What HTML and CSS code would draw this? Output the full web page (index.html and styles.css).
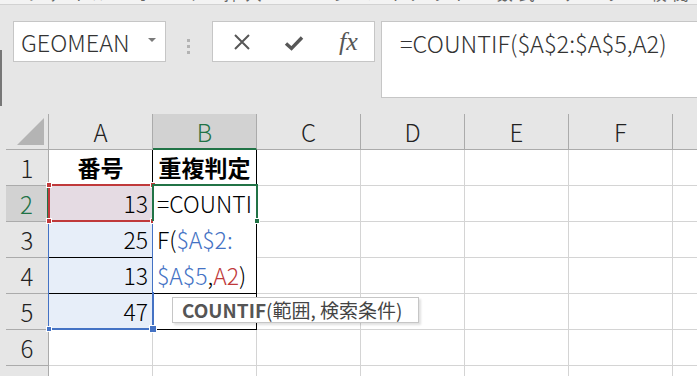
FILE: index.html
```html
<!DOCTYPE html>
<html lang="ja">
<head>
    <meta charset="UTF-8">
    <meta name="viewport" content="width=device-width, initial-scale=1.0">
    <title>COUNTIF 重複判定</title>
    <link rel="stylesheet" href="styles.css">
</head>
<body>
    <div class="ribbon-edge">
        <span>ファイル　ホーム　挿入　ページ レイアウト　数式　データ　校閲　表示　ヘルプ</span>
    </div>

    <div class="fbar">
        <div class="edge"></div>
        <div class="namebox">
            <span>GEOMEAN</span>
            <span class="drop"></span>
        </div>
        <div class="grip">
            <i></i><i></i><i></i>
        </div>
        <div class="fbtns">
            <svg class="ico-x" width="18" height="18" viewBox="0 0 18 18">
                <path d="M2 2L16 16M16 2L2 16" stroke="#575757" stroke-width="2" fill="none"/>
            </svg>
            <svg class="ico-ok" width="20" height="16" viewBox="0 0 20 16">
                <path d="M2 8.5L7.5 13.5L18 2.5" stroke="#575757" stroke-width="3.4" fill="none"/>
            </svg>
            <span class="fx">fx</span>
        </div>
        <div class="formula">=COUNTIF($A$2:$A$5,A2)</div>
    </div>

    <div class="sheet">
        <!-- header row -->
        <div class="hd corner"><span class="tri"></span></div>
        <div class="hd">A</div>
        <div class="hd hd-sel">B</div>
        <div class="hd">C</div>
        <div class="hd">D</div>
        <div class="hd">E</div>
        <div class="hd">F</div>
        <div class="hd"></div>

        <!-- row 1 -->
        <div class="rh">1</div>
        <div class="c t th">番号</div>
        <div class="c t th">重複判定</div>
        <div class="c"></div><div class="c"></div><div class="c"></div><div class="c"></div><div class="c"></div>

        <!-- row 2 -->
        <div class="rh rh-sel">2</div>
        <div class="c t num ref-red">13</div>
        <div class="c t tb"></div>
        <div class="c"></div><div class="c"></div><div class="c"></div><div class="c"></div><div class="c"></div>

        <!-- row 3 -->
        <div class="rh">3</div>
        <div class="c t num ref-blue">25</div>
        <div class="c t tb"></div>
        <div class="c"></div><div class="c"></div><div class="c"></div><div class="c"></div><div class="c"></div>

        <!-- row 4 -->
        <div class="rh">4</div>
        <div class="c t num ref-blue">13</div>
        <div class="c t tb"></div>
        <div class="c"></div><div class="c"></div><div class="c"></div><div class="c"></div><div class="c"></div>

        <!-- row 5 -->
        <div class="rh">5</div>
        <div class="c t num ref-blue">47</div>
        <div class="c t tb"></div>
        <div class="c"></div><div class="c"></div><div class="c"></div><div class="c"></div><div class="c"></div>

        <!-- row 6 -->
        <div class="rh">6</div>
        <div class="c"></div><div class="c"></div><div class="c"></div><div class="c"></div><div class="c"></div><div class="c"></div><div class="c"></div>

        <!-- row 7 -->
        <div class="rh">7</div>
        <div class="c"></div><div class="c"></div><div class="c"></div><div class="c"></div><div class="c"></div><div class="c"></div><div class="c"></div>

        <!-- overlays: reference ranges, edit box, tooltip -->
        <div class="range-blue">
            <span class="sq sq-bl"></span>
            <span class="sq sq-br"></span>
        </div>
        <div class="range-red">
            <span class="rsq rsq-tl"></span>
            <span class="rsq rsq-tr"></span>
            <span class="rsq rsq-bl"></span>
            <span class="rsq rsq-br"></span>
        </div>
        <div class="editor">=COUNTI<br>F(<span class="k-blue">$A$2:</span><br><span class="k-blue">$A$5</span>,<span class="k-red">A2</span>)</div>
        <div class="active">
            <span class="handle"></span>
        </div>
        <div class="tip"><b>COUNTIF</b>(範囲, 検索条件)</div>
    </div>
</body>
</html>
```

FILE: styles.css
```css
:root {
    --bg: #e6e6e6;
    --grid: #d4d4d4;
    --head-line: #ababab;
    --green: #217346;
    --blue: #4472c4;
    --red: #c0393b;
    --text: #222222;
}

* {
    margin: 0;
    padding: 0;
    box-sizing: border-box;
}

body {
    width: 697px;
    height: 376px;
    overflow: hidden;
    background: var(--bg);
    color: var(--text);
    font-family: "Noto Sans CJK JP", "Noto Sans", sans-serif;
}

/* Ribbon edge (cut off at top) */
.ribbon-edge {
    height: 5px;
    overflow: hidden;
    background: #f3f3f3;
    border-bottom: 1px solid #d2d2d2;
    white-space: nowrap;
}

.ribbon-edge span {
    display: block;
    margin-top: -16px;
    margin-left: 26px;
    font-size: 16px;
    line-height: 18px;
    letter-spacing: 6px;
    color: #666;
}

/* Formula bar */
.fbar {
    display: flex;
    align-items: flex-start;
    height: 109px;
}

.edge {
    width: 2px;
    height: 56px;
    margin-top: 45px;
    background: #777;
    flex-shrink: 0;
}

.namebox {
    display: flex;
    align-items: center;
    justify-content: space-between;
    width: 153px;
    height: 41px;
    margin: 16px 0 0 11px;
    padding: 0 9px 0 7px;
    background: #fff;
    border: 1px solid #c6c6c6;
    font-size: 23.5px;
    font-weight: 300;
    line-height: 30px;
    color: #333;
    flex-shrink: 0;
}

.drop {
    width: 0;
    height: 0;
    border-left: 4px solid transparent;
    border-right: 4px solid transparent;
    border-top: 4px solid #7a7a7a;
    margin-top: -4px;
}

.grip {
    display: flex;
    flex-direction: column;
    gap: 3px;
    margin: 34px 0 0 21px;
    flex-shrink: 0;
}

.grip i {
    width: 3px;
    height: 3px;
    background: #b3b3b3;
}

.fbtns {
    display: flex;
    align-items: center;
    width: 163px;
    height: 41px;
    margin: 16px 0 0 22px;
    background: #fff;
    border: 1px solid #c6c6c6;
    flex-shrink: 0;
}

.ico-x {
    margin-left: 20px;
}

.ico-ok {
    margin-left: 33px;
    margin-top: 3px;
}

.fx {
    margin-left: 35px;
    font-family: "Liberation Serif", serif;
    font-style: italic;
    font-size: 26px;
    line-height: 26px;
    color: #575757;
}

.formula {
    width: 330px;
    height: 77px;
    margin: 16px 0 0 6px;
    padding: 3px 0 0 18px;
    background: #fff;
    border: 1px solid #c6c6c6;
    border-right: none;
    font-size: 23.6px;
    font-weight: 300;
    line-height: 36px;
    color: #333;
    flex-shrink: 0;
}

/* Sheet grid */
.sheet {
    position: relative;
    display: grid;
    grid-template-columns: 43px repeat(7, 104px);
    grid-template-rows: 36px repeat(7, 36px);
    margin-left: 6px;
    width: 771px;
    background: #fff;
}

.hd {
    background: var(--bg);
    border-right: 1px solid var(--head-line);
    border-bottom: 1px solid var(--head-line);
    text-align: center;
    font-size: 24px;
    font-weight: 300;
    line-height: 35px;
    color: var(--text);
}

.hd-sel {
    background: #d2d2d2;
    border-bottom: 2px solid var(--green);
    color: var(--green);
}

.corner {
    display: flex;
    align-items: flex-end;
    justify-content: flex-end;
    padding: 0 4px 4px 0;
}

.tri {
    width: 0;
    height: 0;
    border-left: 27px solid transparent;
    border-bottom: 27px solid #b4b4b4;
}

.rh {
    background: var(--bg);
    border-right: 1px solid var(--head-line);
    border-bottom: 1px solid var(--head-line);
    text-align: center;
    font-size: 24px;
    font-weight: 300;
    line-height: 35px;
    color: var(--text);
}

.rh-sel {
    background: #d2d2d2;
    border-right: 2px solid var(--green);
    color: var(--green);
}

.c {
    border-right: 1px solid var(--grid);
    border-bottom: 1px solid var(--grid);
    font-size: 23px;
    font-weight: 300;
    line-height: 35px;
    color: #000;
}

/* Table cells with thin black borders */
.t {
    border-right-color: #000;
    border-bottom-color: #000;
}

.th {
    text-align: center;
    font-weight: bold;
}

.num {
    text-align: right;
    padding-right: 4px;
}

.ref-red {
    background: #e5dbe3;
}

.ref-blue {
    background: #e7eef9;
}

/* Blue reference range A2:A5 */
.range-blue {
    position: absolute;
    left: 42px;
    top: 106px;
    width: 106px;
    height: 110px;
    border-left: 1px solid var(--blue);
    border-right: 2px solid var(--blue);
    border-bottom: 2px solid var(--blue);
}

.sq {
    position: absolute;
    background: var(--blue);
    border: 1px solid #fff;
}

.sq-bl {
    left: -3px;
    bottom: -4px;
    width: 6px;
    height: 6px;
}

.sq-br {
    right: -5px;
    bottom: -5px;
    width: 8px;
    height: 8px;
}

/* Red reference A2 */
.range-red {
    position: absolute;
    left: 42px;
    top: 70px;
    width: 106px;
    height: 38px;
    border: 2px solid var(--red);
}

.rsq {
    position: absolute;
    width: 6px;
    height: 6px;
    background: var(--red);
    border: 1px solid #fff;
}

.rsq-tl { left: -4px; top: -4px; }
.rsq-tr { right: -4px; top: -4px; }
.rsq-bl { left: -4px; bottom: -4px; }
.rsq-br { right: -4px; bottom: -4px; }

/* In-cell editor over B2:B4 */
.editor {
    position: absolute;
    left: 147px;
    top: 71px;
    width: 103px;
    height: 107px;
    padding-left: 4px;
    background: #fff;
    font-size: 23px;
    font-weight: 300;
    line-height: 36px;
    color: #000;
    white-space: nowrap;
    overflow: hidden;
}

.k-blue {
    color: var(--blue);
}

.k-red {
    color: var(--red);
}

.active {
    position: absolute;
    left: 146px;
    top: 70px;
    width: 106px;
    height: 37px;
    border: 2px solid var(--green);
    border-bottom: none;
}

.handle {
    position: absolute;
    right: -4px;
    bottom: -3px;
    width: 6px;
    height: 6px;
    background: var(--green);
    border: 1px solid #fff;
}

/* Function tooltip */
.tip {
    position: absolute;
    left: 166px;
    top: 183px;
    width: 247px;
    height: 26px;
    padding-left: 9px;
    background: #fff;
    border: 1px solid #c6c6c6;
    box-shadow: 2px 2px 2px rgba(0, 0, 0, 0.12);
    font-size: 19px;
    line-height: 24px;
    color: #444;
    white-space: nowrap;
}

.tip b {
    font-weight: bold;
    color: #555;
}
```
